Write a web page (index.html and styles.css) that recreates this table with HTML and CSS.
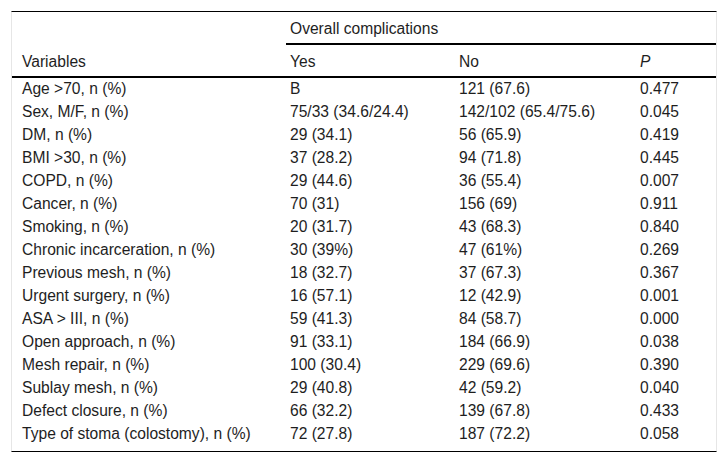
FILE: index.html
```html
<!DOCTYPE html>
<html>
<head>
<meta charset="utf-8">
<link rel="stylesheet" href="styles.css">
</head>
<body>
<div class="wrap">
<table class="tbl">
<colgroup>
<col class="c1"><col class="c2"><col class="c3"><col class="c4">
</colgroup>
<thead>
<tr class="h1"><th></th><th colspan="3" class="group"><div class="group-label">Overall complications</div></th></tr>
<tr class="h2"><th>Variables</th><th>Yes</th><th>No</th><th><i>P</i></th></tr>
</thead>
<tbody>
<tr><td>Age &gt;70, n (%)</td><td>B</td><td>121 (67.6)</td><td>0.477</td></tr>
<tr><td>Sex, M/F, n (%)</td><td>75/33 (34.6/24.4)</td><td>142/102 (65.4/75.6)</td><td>0.045</td></tr>
<tr><td>DM, n (%)</td><td>29 (34.1)</td><td>56 (65.9)</td><td>0.419</td></tr>
<tr><td>BMI &gt;30, n (%)</td><td>37 (28.2)</td><td>94 (71.8)</td><td>0.445</td></tr>
<tr><td>COPD, n (%)</td><td>29 (44.6)</td><td>36 (55.4)</td><td>0.007</td></tr>
<tr><td>Cancer, n (%)</td><td>70 (31)</td><td>156 (69)</td><td>0.911</td></tr>
<tr><td>Smoking, n (%)</td><td>20 (31.7)</td><td>43 (68.3)</td><td>0.840</td></tr>
<tr><td>Chronic incarceration, n (%)</td><td>30 (39%)</td><td>47 (61%)</td><td>0.269</td></tr>
<tr><td>Previous mesh, n (%)</td><td>18 (32.7)</td><td>37 (67.3)</td><td>0.367</td></tr>
<tr><td>Urgent surgery, n (%)</td><td>16 (57.1)</td><td>12 (42.9)</td><td>0.001</td></tr>
<tr><td>ASA &gt; III, n (%)</td><td>59 (41.3)</td><td>84 (58.7)</td><td>0.000</td></tr>
<tr><td>Open approach, n (%)</td><td>91 (33.1)</td><td>184 (66.9)</td><td>0.038</td></tr>
<tr><td>Mesh repair, n (%)</td><td>100 (30.4)</td><td>229 (69.6)</td><td>0.390</td></tr>
<tr><td>Sublay mesh, n (%)</td><td>29 (40.8)</td><td>42 (59.2)</td><td>0.040</td></tr>
<tr><td>Defect closure, n (%)</td><td>66 (32.2)</td><td>139 (67.8)</td><td>0.433</td></tr>
<tr class="last"><td>Type of stoma (colostomy), n (%)</td><td>72 (27.8)</td><td>187 (72.2)</td><td>0.058</td></tr>
</tbody>
</table>
</div>
</body>
</html>
```

FILE: styles.css
```css
html, body {
  margin: 0;
  padding: 0;
  background: #fff;
}
.wrap {
  padding: 11px 0 0 11px;
}
.tbl {
  width: 706px;
  border-collapse: separate;
  border-spacing: 0;
  table-layout: fixed;
  font-family: "Liberation Sans", Arial, sans-serif;
  font-size: 15.6px;
  color: #1e1e1e;
  border-left: 1px solid #e6e6e6;
  border-right: 1px solid #e6e6e6;
  border-top: 1px solid #000;
  border-bottom: 1px solid #000;
}
.c1 { width: 268px; }
.c2 { width: 169px; }
.c3 { width: 181px; }
.c4 { width: 86px; }
.tbl th {
  font-weight: normal;
  text-align: left;
  vertical-align: top;
  padding: 8px 10px 5px 10px;
  line-height: 18px;
}
.h1 th.group {
  padding: 0 0 0 6px;
}
.group-label {
  border-bottom: 2px solid #000;
  padding: 8px 0 5px 4px;
  line-height: 18px;
}
.h2 th {
  border-bottom: 2px solid #000;
}
.tbl td {
  padding: 2px 10px 3px 10px;
  line-height: 18px;
  vertical-align: top;
  white-space: nowrap;
}
.tbl tr.last td {
  padding-bottom: 8px;
}
```
